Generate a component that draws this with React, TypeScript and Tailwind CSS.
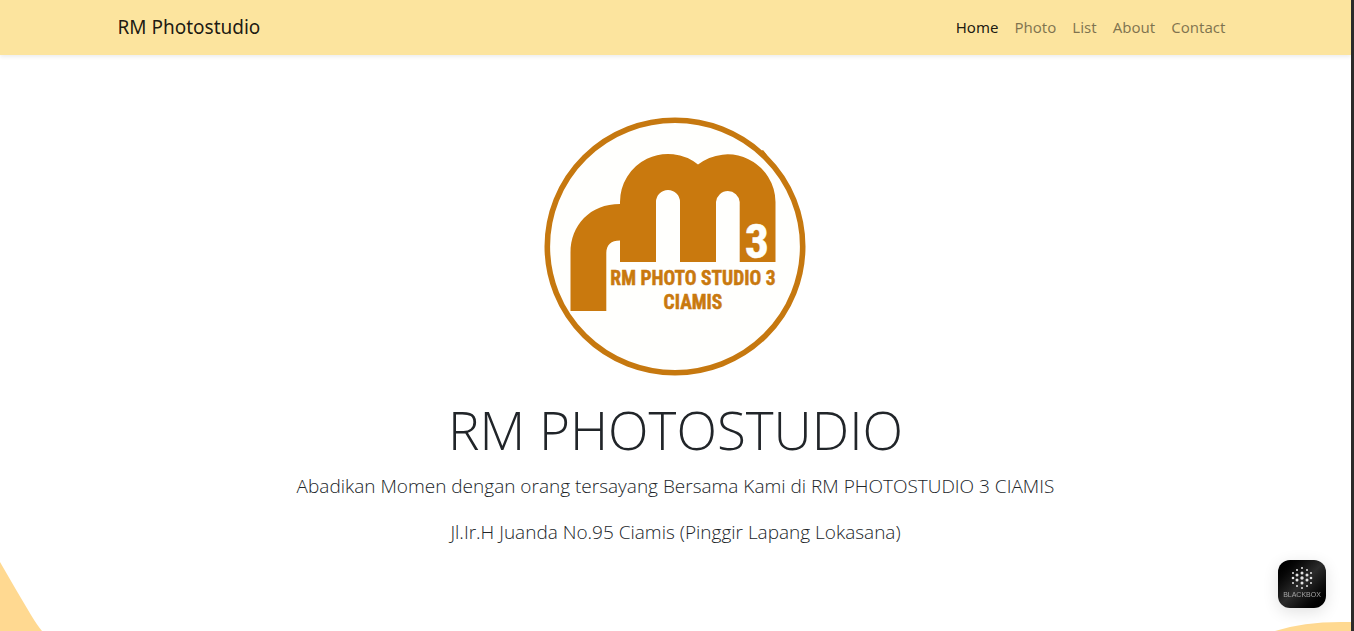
import React from "react";

const links = ["Home", "Photo", "List", "About", "Contact"];

const dots: [number, number, number][] = [
  [24, 8, 1], [19, 10, 1], [29, 10, 1],
  [15, 13, 1], [24, 13, 1.5], [33, 13, 1],
  [19, 15, 1.5], [29, 15, 1.5],
  [15, 18, 1.3], [24, 18, 1.7], [33, 18, 1.3],
  [19, 20, 1.5], [29, 20, 1.5],
  [15, 23, 1], [24, 23, 1.5], [33, 23, 1],
  [19, 26, 1], [29, 26, 1], [24, 28, 1],
];

function StudioLogo() {
  return (
    <svg
      viewBox="1 -1 262 260"
      className="h-[260px] w-[262px] overflow-visible"
      role="img"
      aria-label="RM Photo Studio 3 Ciamis"
    >
      <ellipse cx="131" cy="129.500" rx="127.7" ry="126.2" fill="#fffffd" stroke="#c6780f" strokeWidth="5.6" />
      <path d="M215 35 L219 33 L223 38 Z" fill="#c6780f" />
      <g fill="#c9790e">
        <path d="M26.5 194 V136 C26.5 108 46 87 76 87 V85.5 A48 48 0 0 1 154 47.5 A48 48 0 0 1 231.500 85 V145 H195.700 V85 A11.900 12 0 0 0 172 85 V145 H136 V85 A12 12 0 0 0 112 85 V145 H76 V123.500 C67 123.500 62.300 128 62.300 136 V194 Z" />
        <g stroke="#c9790e" strokeWidth="0.500" textAnchor="middle" fontFamily="'Roboto Condensed', 'Liberation Sans Narrow', 'Liberation Sans', sans-serif" fontWeight="700" fontSize="19.500">
          <text x="149" y="168">RM PHOTO STUDIO 3</text>
          <text x="149" y="192">CIAMIS</text>
        </g>
      </g>
      <text x="213" y="141" textAnchor="middle" fill="#fefffc" stroke="#fefffc" strokeWidth="0.500" fontFamily="'Roboto Condensed', 'Liberation Sans Narrow', 'Liberation Sans', sans-serif" fontWeight="700" fontSize="48">
        3
      </text>
    </svg>
  );
}

function BlackboxButton() {
  return (
    <button
      type="button"
      aria-label="Blackbox"
      className="fixed right-7 bottom-[23px] size-12 overflow-hidden rounded-xl bg-linear-to-br from-black via-[#2c2c2c] to-black shadow-[0_4px_16px_rgba(0,0,0,0.12)]"
    >
      <svg viewBox="0 0 48 48" className="size-12">
        {dots.map(([x, y, r]) => (
          <circle key={`${x}-${y}`} cx={x} cy={y} r={r} fill="#e4e4e4" />
        ))}
        <text x="24" y="37" textAnchor="middle" fill="#a3a3a3" fontFamily="'Liberation Sans', sans-serif" fontSize="7">
          BLACKBOX
        </text>
      </svg>
    </button>
  );
}

export default function App() {
  return (
    <div className="relative flex min-h-screen flex-col overflow-hidden border-r-3 border-[#2b2b2b] bg-white font-['Open_Sans','Noto_Sans',sans-serif] text-[#212529]">
      <header className="bg-[#fce49e] font-['Noto_Sans','Open_Sans',sans-serif] shadow-[0_2px_4px_rgba(0,0,0,0.075)]">
        <nav className="mx-auto flex h-[55px] max-w-[1140px] items-center justify-between px-3">
          <a href="#" className="text-[19px] text-black/90">
            RM Photostudio
          </a>
          <ul className="flex text-[15px]">
            {links.map((label) => (
              <li key={label}>
                <a href={`#${label.toLowerCase()}`} className={label === "Home" ? "px-2 text-black/90" : "px-2 text-black/50"}>
                  {label}
                </a>
              </li>
            ))}
          </ul>
        </nav>
      </header>

      <main className="flex flex-col items-center px-4 pt-[61px] text-center">
        <StudioLogo />
        <h1 className="mt-5 text-[53px] leading-[67px] font-light">RM PHOTOSTUDIO</h1>
        <p className="mt-2 text-[19px] leading-[30px] font-light">
          Abadikan Momen dengan orang tersayang Bersama Kami di RM PHOTOSTUDIO 3 CIAMIS
        </p>
        <p className="mt-4 text-[19px] leading-[30px] font-light">
          Jl.Ir.H Juanda No.95 Ciamis (Pinggir Lapang Lokasana)
        </p>
      </main>

      <svg viewBox="0 0 42 69" className="absolute bottom-0 left-0 h-[69px] w-[42px]" aria-hidden="true">
        <path d="M0 0 Q16 28 31 53 Q37 63 42 69 H0 Z" fill="#ffd991" />
      </svg>
      <svg viewBox="0 0 76 9" className="absolute right-0 bottom-0 h-[9px] w-[76px]" aria-hidden="true">
        <path d="M0 9 Q28 0 66 0 H76 V9 Z" fill="#ffd991" />
      </svg>

      <BlackboxButton />
    </div>
  );
}
